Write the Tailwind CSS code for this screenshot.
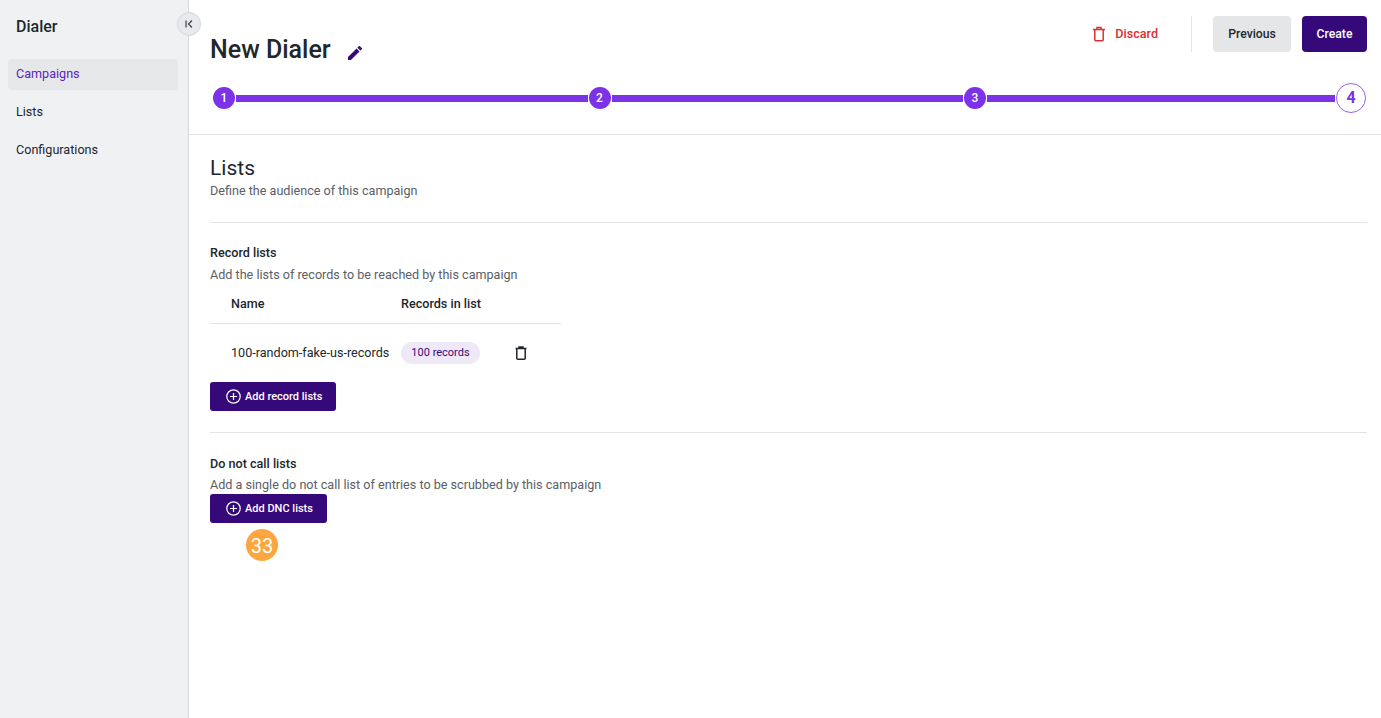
<!DOCTYPE html>
<html lang="en">
<head>
    <meta charset="UTF-8" />
    <title>New Dialer</title>
    <script src="https://cdn.jsdelivr.net/npm/@tailwindcss/browser@4"></script>
</head>
<body class="bg-white h-[718px] overflow-hidden font-['Roboto',sans-serif] text-[#21272c]">
    <div class="flex h-full">
        <!-- sidebar -->
        <aside class="relative w-[189px] shrink-0 bg-[#f0f1f3] border-r border-[#d5d8dc] pl-2 pr-[10px]">
            <div class="pl-2 pt-[16px] h-[59px] text-[16px] leading-[21px] font-medium">Dialer</div>
            <div class="h-[31px] rounded bg-[#e6e7e9] pl-2 pb-[1px] flex items-center text-[12.6px] text-[#5b1fc0]">Campaigns</div>
            <div class="mt-[7px] h-[31px] pl-2 pb-[1px] flex items-center text-[12.6px]">Lists</div>
            <div class="mt-[7px] h-[31px] pl-2 pb-[1px] flex items-center text-[12.6px]">Configurations</div>
            <button class="absolute left-[177px] top-[12px] w-[24px] h-[24px] rounded-full bg-[#e8e9eb] border border-[#d5d8dc] flex items-center justify-center">
                <svg class="w-[10px] h-[10px]" viewBox="0 0 10 10" fill="none" stroke="#3a4046" stroke-width="1.2"><path d="M2 1.5v7M8 1.5 4.4 5 8 8.5"/></svg>
            </button>
        </aside>

        <main class="flex-1 min-w-0">
            <!-- header -->
            <div class="h-[135px] border-b border-[#e3e4e6] pl-[21px] pr-[14px]">
                <div class="flex items-start h-[83px]">
                    <h1 class="mt-[34px] text-[25px] leading-[32px] font-medium">New Dialer</h1>
                    <svg class="mt-[46px] ml-[17px] w-[14px] h-[14px]" viewBox="3 3 18 18" fill="#36097a"><path d="M3 17.25V21h3.75L17.81 9.94l-3.75-3.75L3 17.25zM20.71 7.04a1 1 0 0 0 0-1.41l-2.34-2.34a1 1 0 0 0-1.41 0l-1.83 1.83 3.75 3.75 1.83-1.83z"/></svg>
                    <div class="ml-auto mt-[16px] flex items-center h-[36px]">
                        <svg class="w-[14px] h-[16px]" viewBox="0 0 14 16" fill="none" stroke="#dc2f2f" stroke-width="1.5"><path d="M1 3.5h12M5 3.5V1.5h4v2M2.8 3.5v10.2a1 1 0 0 0 1 1h6.4a1 1 0 0 0 1-1V3.5"/></svg>
                        <span class="ml-[9px] text-[12.6px] font-medium text-[#dc2f2f]">Discard</span>
                        <div class="ml-[33px] w-px h-[36px] bg-[#e3e4e6]"></div>
                        <button class="ml-[21px] w-[78px] h-[36px] rounded bg-[#e5e6e8] text-[12.2px] font-medium">Previous</button>
                        <button class="ml-[11px] w-[65px] h-[36px] rounded bg-[#36097a] text-[12.2px] font-medium text-white">Create</button>
                    </div>
                </div>
                <!-- stepper -->
                <div class="flex items-center h-[30px] pl-[3px] pr-[1px]">
                    <div class="w-[22px] h-[22px] shrink-0 rounded-full bg-[#7c32e6] text-white text-[12px] font-medium flex items-center justify-center">1</div>
                    <div class="flex-1 h-[7px] mx-[1px] bg-[#7c32e6]"></div>
                    <div class="w-[22px] h-[22px] shrink-0 rounded-full bg-[#7c32e6] text-white text-[12px] font-medium flex items-center justify-center">2</div>
                    <div class="flex-1 h-[7px] mx-[1px] bg-[#7c32e6]"></div>
                    <div class="w-[22px] h-[22px] shrink-0 rounded-full bg-[#7c32e6] text-white text-[12px] font-medium flex items-center justify-center">3</div>
                    <div class="w-[348px] shrink-0 h-[7px] mx-[1px] bg-[#7c32e6]"></div>
                    <div class="w-[30px] h-[30px] shrink-0 rounded-full bg-white border border-[#9a5fee] text-[#7c32e6] text-[16px] font-bold flex items-center justify-center">4</div>
                </div>
            </div>

            <!-- content -->
            <div class="pl-[21px] pr-[14px]">
                <div class="pt-[20px] h-[88px] border-b border-[#e3e4e6]">
                    <h2 class="text-[21px] leading-[26px]">Lists</h2>
                    <p class="mt-[2px] text-[12.6px] leading-[16px] text-[#5a6066]">Define the audience of this campaign</p>
                </div>

                <section class="pt-[22px] h-[210px] border-b border-[#e3e4e6]">
                    <h3 class="text-[12.6px] leading-[16px] font-medium">Record lists</h3>
                    <p class="mt-[6px] text-[12.6px] leading-[16px] text-[#5a6066]">Add the lists of records to be reached by this campaign</p>
                    <div class="w-[351px] mt-[4px] h-[37px] pb-[1px] flex items-center border-b border-[#e3e4e6] pl-[21px] text-[12.6px] font-medium">
                        <span class="w-[170px]">Name</span>
                        <span>Records in list</span>
                    </div>
                    <div class="w-[351px] h-[58px] flex items-center pl-[21px] text-[12.6px]">
                        <span class="w-[170px] whitespace-nowrap">100-random-fake-us-records</span>
                        <span class="w-[79px] h-[22px] rounded-full bg-[#efe8f7] text-[#36097a] text-[11px] flex items-center justify-center">100 records</span>
                        <svg class="ml-[35px] w-[12px] h-[14px]" viewBox="0 0 12 14" fill="none" stroke="#21272c" stroke-width="1.5"><path d="M0.5 2.5h11M4 2.5V1h4v1.5M1.8 2.5v9.7a1 1 0 0 0 1 1h6.4a1 1 0 0 0 1-1V2.5"/></svg>
                    </div>
                    <button class="w-[126px] h-[29px] rounded-[3px] bg-[#36097a] text-white text-[11px] font-medium flex items-center pl-[16px]">
                        <svg class="w-[15px] h-[15px] mr-[4px]" viewBox="0 0 15 15" fill="none" stroke="white" stroke-width="1.2"><circle cx="7.5" cy="7.5" r="6.7"/><path d="M7.5 4v7M4 7.5h7"/></svg>
                        <span class="pt-[1px]">Add record lists</span>
                    </button>
                </section>

                <section class="pt-[23px]">
                    <h3 class="text-[12.6px] leading-[16px] font-medium">Do not call lists</h3>
                    <p class="mt-[5px] text-[12.6px] leading-[16px] text-[#5a6066]">Add a single do not call list of entries to be scrubbed by this campaign</p>
                    <button class="mt-[1px] w-[117px] h-[29px] rounded-[3px] bg-[#36097a] text-white text-[11px] font-medium flex items-center pl-[16px]">
                        <svg class="w-[15px] h-[15px] mr-[4px]" viewBox="0 0 15 15" fill="none" stroke="white" stroke-width="1.2"><circle cx="7.5" cy="7.5" r="6.7"/><path d="M7.5 4v7M4 7.5h7"/></svg>
                        <span class="pt-[1px]">Add DNC lists</span>
                    </button>
                    <div class="mt-[6px] ml-[36px] w-[32px] h-[32px] pt-[2px] rounded-full bg-[#fba63f] text-white text-[20px] flex items-center justify-center">33</div>
                </section>
            </div>
        </main>
    </div>
</body>
</html>
